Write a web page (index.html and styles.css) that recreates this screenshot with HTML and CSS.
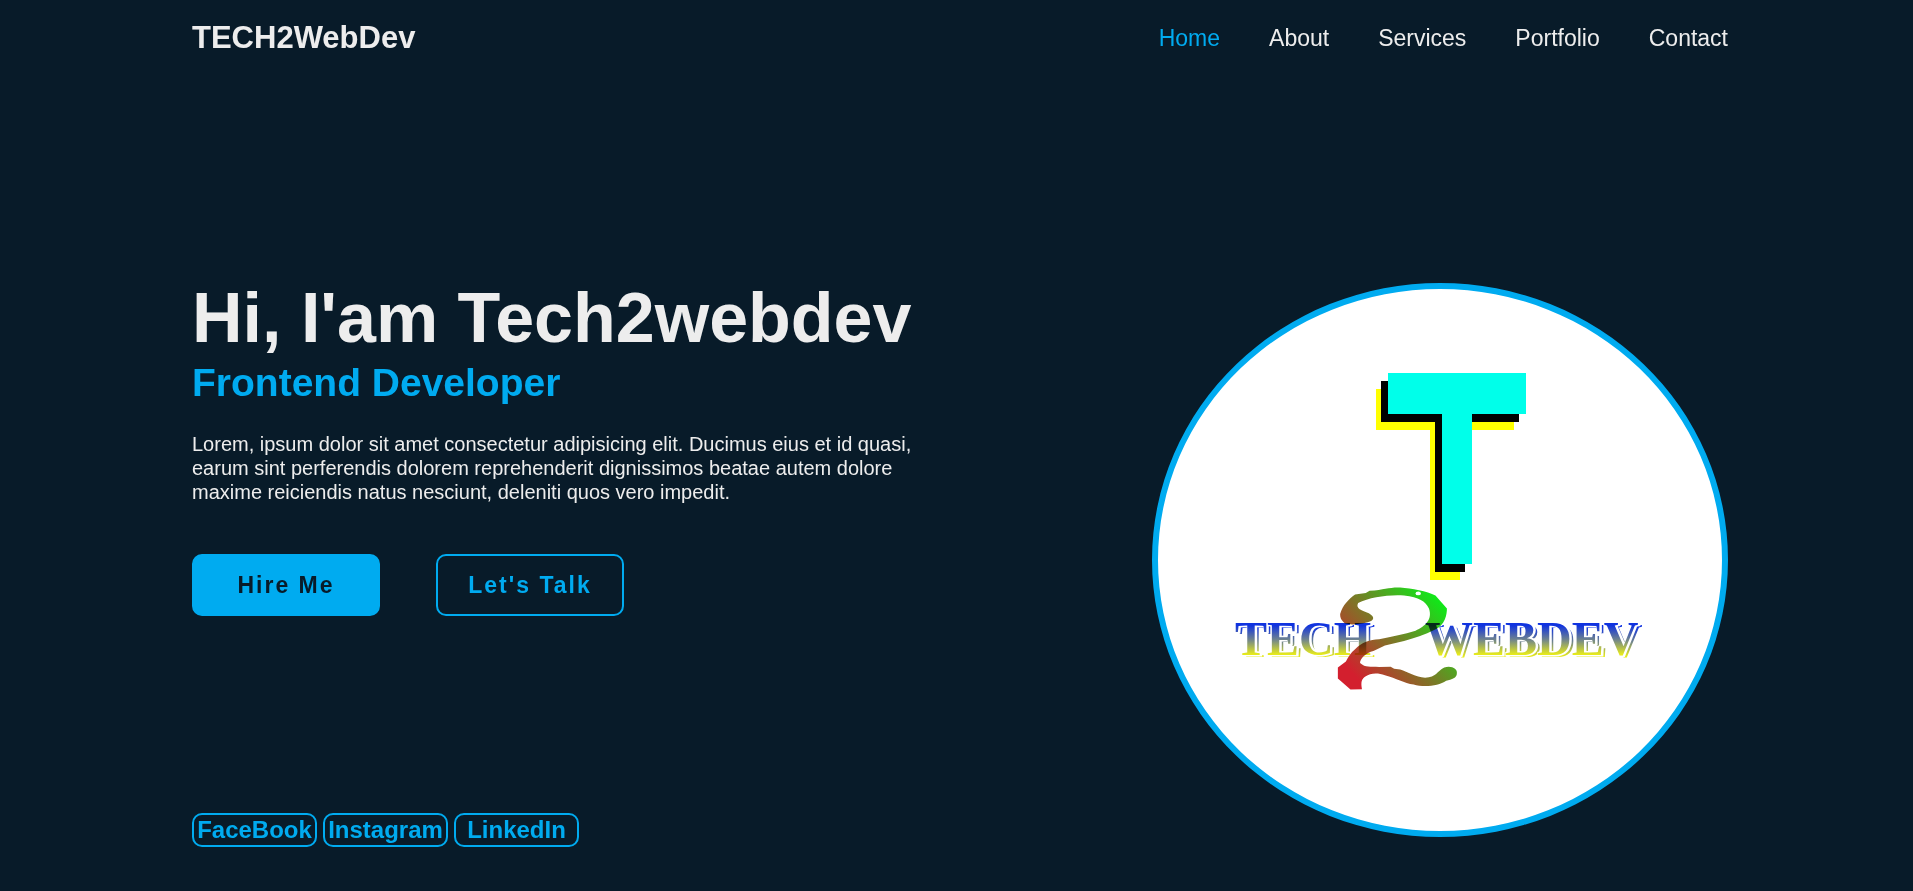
FILE: index.html
```html
<!DOCTYPE html>
<html lang="en">
<head>
<meta charset="utf-8">
<meta name="viewport" content="width=device-width, initial-scale=1">
<title>TECH2WebDev</title>
<link rel="stylesheet" href="styles.css">
</head>
<body>
<header class="header">
  <a class="brand" href="#">TECH2WebDev</a>
  <nav class="nav">
    <a class="nav-link active" href="#home">Home</a>
    <a class="nav-link" href="#about">About</a>
    <a class="nav-link" href="#services">Services</a>
    <a class="nav-link" href="#portfolio">Portfolio</a>
    <a class="nav-link" href="#contact">Contact</a>
  </nav>
</header>
<main class="hero" id="home">
  <section class="intro">
    <h1 class="title">Hi, I'am Tech2webdev</h1>
    <h2 class="role">Frontend Developer</h2>
    <p class="text">Lorem, ipsum dolor sit amet consectetur adipisicing elit. Ducimus eius et id quasi, earum sint perferendis dolorem reprehenderit dignissimos beatae autem dolore maxime reiciendis natus nesciunt, deleniti quos vero impedit.</p>
    <div class="actions">
      <a class="btn btn-solid" href="#hire">Hire Me</a>
      <a class="btn" href="#talk">Let's Talk</a>
    </div>
    <div class="social">
      <a class="social-link" href="#facebook">FaceBook</a>
      <a class="social-link" href="#instagram">Instagram</a>
      <a class="social-link" href="#linkedin">LinkedIn</a>
    </div>
  </section>
  <div class="portrait">
    <svg class="emblem" viewBox="0 0 564 542" role="img" aria-label="Tech2WebDev logo">
      <defs>
        <linearGradient id="word" gradientUnits="userSpaceOnUse" x1="0" y1="333" x2="0" y2="367">
          <stop offset="0.1" stop-color="#1033e0"/>
          <stop offset="0.5" stop-color="#6a7f92"/>
          <stop offset="0.95" stop-color="#e6ea1c"/>
        </linearGradient>
        <linearGradient id="brush" gradientUnits="userSpaceOnUse" x1="555" y1="1090" x2="775" y2="890">
          <stop offset="0" stop-color="#d31f2e"/>
          <stop offset="0.45" stop-color="#7f7427"/>
          <stop offset="1" stop-color="#12e619"/>
        </linearGradient>
        <path id="tee" d="M230 84h138v41h-54v150h-30v-150h-54z"/>
      </defs>
      <use href="#tee" x="-12" y="16" fill="#ff0"/>
      <use href="#tee" x="-7" y="8" fill="#000"/>
      <use href="#tee" fill="#00ffea"/>
      <g class="word" aria-hidden="true">
        <use href="#left-word" x="4" y="2"/>
        <use href="#right-word" x="4" y="2"/>
      </g>
      <g class="word word-gap" aria-hidden="true">
        <use href="#left-word" x="1" y="0"/>
        <use href="#right-word" x="1" y="0"/>
      </g>
      <g transform="translate(-18 -19) scale(.3827 .37)">
        <path fill="url(#brush)" d="M523 930C530 905 545 890 562 877L590 873 600 867C640 864 650 857 680 858 710 860 750 868 772 880L802 915C802 930 798 960 770 972 745 985 715 995 690 1003L640 1015 610 1030C590 1035 575 1050 575 1062 590 1076 600 1070 625 1073L655 1072 664 1078 680 1080C700 1087 720 1100 745 1102 775 1100 775 1085 795 1074 815 1068 830 1078 828 1090 828 1103 815 1107 800 1110 780 1125 740 1128 715 1120 690 1117 670 1103 640 1095 620 1087 600 1090 590 1098 578 1105 577 1115 580 1133L550 1134 517 1104V1074L538 1058C545 1045 550 1035 562 1025 580 1005 600 1000 625 998 660 990 690 985 720 975 745 963 765 945 755 915 745 895 730 885 690 880 650 877 600 885 570 900 562 915 580 920 598 928 615 938 612 948 595 952 570 958 550 960 535 955 525 945 523 940 523 930Z"/>
        <ellipse cx="727" cy="874" rx="7" ry="5" fill="#fff"/>
      </g>
      <g class="word word-top">
        <text id="left-word" x="77" y="366">TECH</text>
        <text id="right-word" x="267" y="366">WEBDEV</text>
      </g>
    </svg>
  </div>
</main>
</body>
</html>
```
FILE: styles.css
```css
* {
  box-sizing: border-box;
  margin: 0;
  padding: 0;
}

:root {
  --bg: #081b29;
  --accent: #00abf0;
  --light: #ededed;
}

body {
  min-height: 100vh;
  background: var(--bg);
  color: var(--light);
  font-family: "Liberation Sans", Arial, sans-serif;
}

a {
  color: inherit;
  text-decoration: none;
}

.header {
  display: flex;
  align-items: center;
  justify-content: space-between;
  min-height: 76px;
  padding: 0 185px 0 192px;
}

.brand {
  font-size: 31px;
  font-weight: 700;
}

.nav {
  display: flex;
  gap: 49px;
  font-size: 23px;
}

.active {
  color: var(--accent);
}

.hero {
  display: grid;
  grid-template-columns: minmax(0, 1fr) minmax(0, 576px);
  align-items: start;
  gap: 40px;
  padding: 202px 185px 44px 192px;
}

.title {
  font-size: 70px;
  line-height: 80px;
}

.role {
  margin-top: 2px;
  color: var(--accent);
  font-size: 39px;
  line-height: 46px;
}

.text {
  max-width: 720px;
  margin-top: 26px;
  font-size: 20px;
  line-height: 24px;
}

.actions {
  display: flex;
  gap: 56px;
  margin-top: 50px;
}

.btn {
  display: flex;
  align-items: center;
  justify-content: center;
  width: 188px;
  height: 62px;
  border: 2px solid var(--accent);
  border-radius: 10px;
  color: var(--accent);
  font-size: 23px;
  font-weight: 700;
  letter-spacing: 2px;
}

.btn-solid {
  background: var(--accent);
  color: var(--bg);
}

.social {
  display: flex;
  gap: 6px;
  margin-top: 197px;
}

.social-link {
  display: flex;
  align-items: center;
  justify-content: center;
  width: 125px;
  height: 34px;
  border: 2px solid var(--accent);
  border-radius: 10px;
  color: var(--accent);
  font-size: 24px;
  font-weight: 700;
}

.portrait {
  margin-top: 5px;
  aspect-ratio: 576 / 554;
  overflow: hidden;
  border: 6px solid var(--accent);
  border-radius: 50%;
  background: #fff;
}

.emblem {
  display: block;
  width: 100%;
  height: 100%;
}

.word {
  fill: url(#word);
  font-family: "Liberation Serif", "Times New Roman", serif;
  font-size: 48px;
  font-weight: 700;
}

.word-gap {
  fill: #fff;
  stroke: #fff;
  stroke-width: 3px;
}

.word-top {
  mix-blend-mode: multiply;
}
```
